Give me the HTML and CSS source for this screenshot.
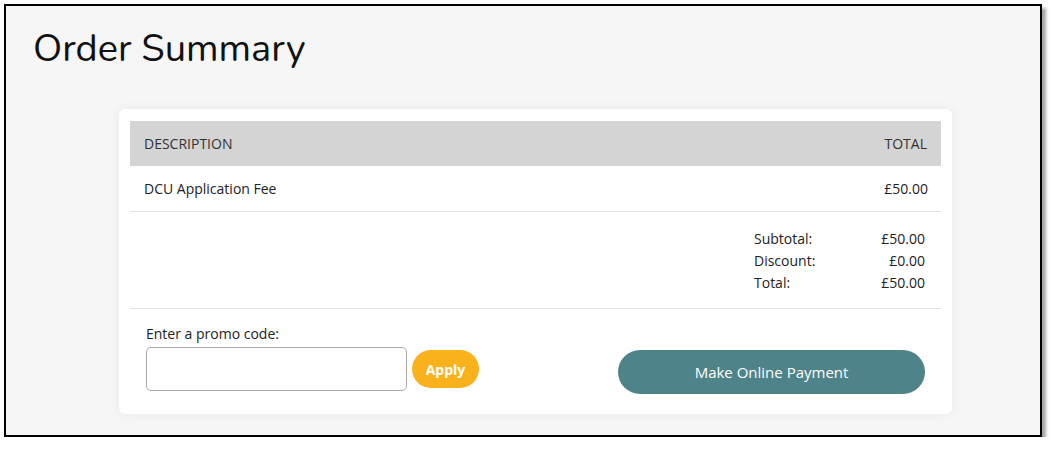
FILE: index.html
```html
<!DOCTYPE html>
<html>
    <head>
        <meta charset="utf-8">
        <title>Order Summary</title>
        <link rel="stylesheet" href="styles.css">
    </head>
    <body>
        <div class="frame">
            <h1>Order Summary</h1>
            <div class="card">
                <div class="row head">
                    <span>DESCRIPTION</span>
                    <span>TOTAL</span>
                </div>
                <div class="row item">
                    <span>DCU Application Fee</span>
                    <span>&pound;50.00</span>
                </div>
                <div class="totals">
                    <div class="sums">
                        <span>Subtotal:</span><span>&pound;50.00</span>
                        <span>Discount:</span><span>&pound;0.00</span>
                        <span>Total:</span><span>&pound;50.00</span>
                    </div>
                </div>
                <div class="actions">
                    <div class="promo">
                        <label for="promo">Enter a promo code:</label>
                        <div class="promo-line">
                            <input id="promo" type="text">
                            <button class="apply">Apply</button>
                        </div>
                    </div>
                    <button class="pay">Make Online Payment</button>
                </div>
            </div>
        </div>
    </body>
</html>
```

FILE: styles.css
```css
*, ::after, ::before {
    box-sizing: border-box;
}
body {
    margin: 0;
    background: #fff;
    font-family: "Open Sans", "Liberation Sans", sans-serif;
    font-size: 14px;
    color: #222;
}
.frame {
    margin: 4px 0 0 4px;
    width: 1038px;
    height: 433px;
    border: 2px solid #000;
    background: #f6f6f6;
    box-shadow: 4px 4px 3px rgba(0, 0, 0, 0.35);
    padding: 20px 0 0 27px;
}
h1 {
    margin: 0;
    font-family: "Nunito", "Lato", "Open Sans", sans-serif;
    font-weight: normal;
    font-size: 38px;
    line-height: 46px;
    color: #111;
}
.card {
    margin: 37px 0 0 86px;
    width: 833px;
    height: 305px;
    background: #fff;
    border-radius: 6px;
    box-shadow: 0 0 12px rgba(0, 0, 0, 0.06);
    padding: 12px 11px 0 11px;
}
.row {
    display: flex;
    justify-content: space-between;
    align-items: center;
    padding: 0 14px;
}
.head {
    height: 45px;
    background: #d4d4d4;
    color: #333;
}
.item {
    height: 46px;
    border-bottom: 1px solid #e2e2e2;
    padding-right: 13px;
}
.totals {
    display: flex;
    justify-content: flex-end;
    border-bottom: 1px solid #e2e2e2;
    padding: 16px 16px 14px 0;
}
.sums {
    display: grid;
    grid-template-columns: 100px 71px;
    line-height: 22px;
}
.sums span:nth-child(even) {
    text-align: right;
}
.actions {
    display: flex;
    justify-content: space-between;
    align-items: flex-start;
    padding: 15px 16px 0 16px;
}
.promo label {
    display: block;
    line-height: 20px;
    margin-bottom: 3px;
}
.promo-line {
    display: flex;
    align-items: center;
    gap: 5px;
}
input[type="text"] {
    width: 261px;
    height: 44px;
    border: 1px solid #aaa;
    border-radius: 5px;
    background: #fff;
}
button {
    border: none;
    font-family: inherit;
    color: #fff;
    cursor: pointer;
}
.apply {
    width: 67px;
    height: 38px;
    border-radius: 19px;
    background: #f9b21b;
    font-weight: bold;
    font-size: 14px;
}
.pay {
    width: 307px;
    height: 44px;
    margin-top: 26px;
    border-radius: 22px;
    background: #4e838a;
    font-size: 15px;
}
```
